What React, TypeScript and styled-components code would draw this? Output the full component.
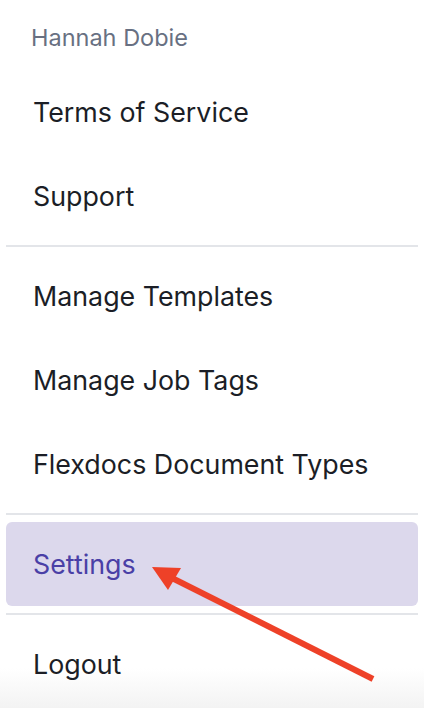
import { createGlobalStyle, styled } from "styled-components";

const GlobalStyle = createGlobalStyle`
  html, body {
    margin: 0;
    padding: 0;
    background: #ffffff;
  }
  body {
    font-family: Inter, "Noto Sans", "Liberation Sans", sans-serif;
    -webkit-font-smoothing: antialiased;
  }
`;

type Item = { label: string; active?: boolean };

const groups: Item[][] = [
  [{ label: "Terms of Service" }, { label: "Support" }],
  [
    { label: "Manage Templates" },
    { label: "Manage Job Tags" },
    { label: "Flexdocs Document Types" },
  ],
  [{ label: "Settings", active: true }],
  [{ label: "Logout" }],
];

const App = () => {
  return (
    <>
      <GlobalStyle />
      <Menu>
        <UserName>Hannah Dobie</UserName>
        {groups.map((group, i) => (
          <Group key={i} $first={i === 0}>
            {group.map((item) => (
              <MenuItem key={item.label} $active={item.active}>
                {item.label}
              </MenuItem>
            ))}
          </Group>
        ))}
        <Arrow viewBox="0 0 424 708" aria-hidden="true">
          <line
            x1="373"
            y1="679"
            x2="170"
            y2="577"
            stroke="#ee4128"
            strokeWidth="6"
            strokeLinecap="butt"
          />
          <polygon points="152,567 181,568 168,590" fill="#ee4128" />
        </Arrow>
      </Menu>
    </>
  );
};

export default App;

const Menu = styled.div`
  position: relative;
  width: 424px;
  height: 708px;
  overflow: hidden;
  padding: 0 6px;
  box-sizing: border-box;
  background: linear-gradient(
    to bottom,
    #ffffff 0px,
    #ffffff 668px,
    #f3f3f3 708px
  );
`;

const UserName = styled.div`
  height: 70px;
  padding: 24px 0 0 25px;
  box-sizing: border-box;
  font-size: 23.5px;
  line-height: 28px;
  color: #687082;
`;

const Group = styled.div<{ $first?: boolean }>`
  display: flex;
  flex-direction: column;
  padding: 7px 0;
  border-top: ${({ $first }) => ($first ? "none" : "2px solid #e3e5e9")};
  ${({ $first }) => $first && "padding-top: 0;"}
`;

const MenuItem = styled.div<{ $active?: boolean }>`
  height: 84px;
  display: flex;
  align-items: center;
  padding-left: 27px;
  border-radius: 6px;
  font-size: 26.8px;
  color: ${({ $active }) => ($active ? "#4a3fa6" : "#1b1e26")};
  background: ${({ $active }) => ($active ? "#dcd8ec" : "transparent")};
`;

const Arrow = styled.svg`
  position: absolute;
  inset: 0;
  width: 424px;
  height: 708px;
  pointer-events: none;
`;
